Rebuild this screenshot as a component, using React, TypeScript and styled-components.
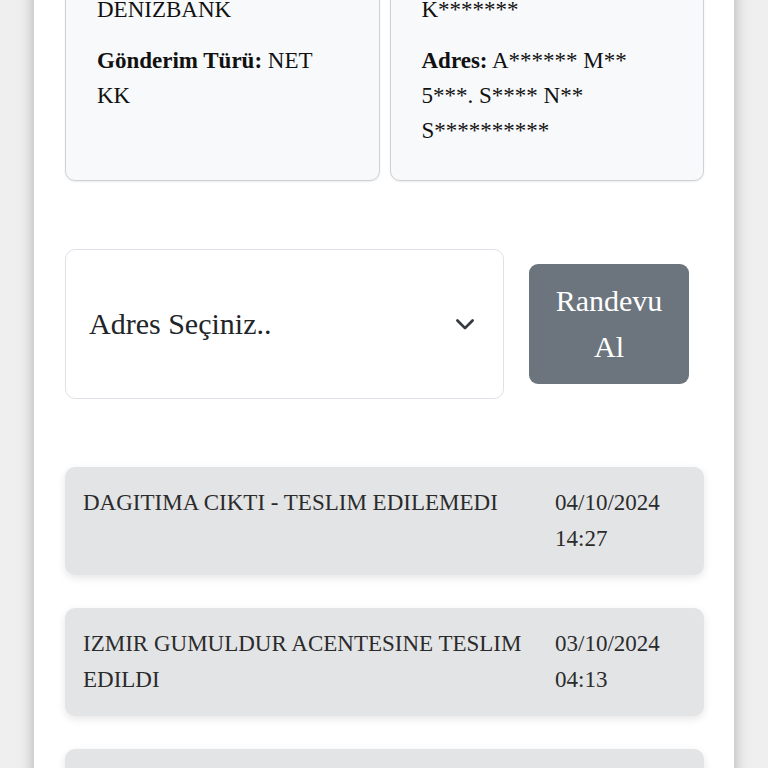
import React from 'react';
import styled, { createGlobalStyle } from 'styled-components';

const GlobalStyle = createGlobalStyle`
	html, body {
		margin: 0;
		padding: 0;
		background: #efefef;
		font-family: "Liberation Serif", "Times New Roman", serif;
		color: #212529;
		overflow: hidden;
	}
	* {
		box-sizing: border-box;
	}
`;

type Movement = {
	status: string;
	date: string;
	time: string;
};

const movements: Movement[] = [
	{ status: 'DAGITIMA CIKTI - TESLIM EDILEMEDI', date: '04/10/2024', time: '14:27' },
	{ status: 'IZMIR GUMULDUR ACENTESINE TESLIM EDILDI', date: '03/10/2024', time: '04:13' },
	{ status: 'IZMIR TRANSFER MERKEZINE ULASTI', date: '02/10/2024', time: '22:51' },
];

const ChevronDown = () => (
	<svg width="22" height="22" viewBox="0 0 16 16" fill="none">
		<path
			d="m2.5 5.5 5.5 5.5 5.5-5.5"
			stroke="#343a40"
			strokeWidth="2"
			strokeLinecap="round"
			strokeLinejoin="round"
		/>
	</svg>
);

const App = () => (
	<>
		<GlobalStyle />
		<Panel>
			<InfoGrid>
				<InfoCard>
					<Line>
						<b>Gönderici Firma:</b> DENIZBANK
					</Line>
					<Line>
						<b>Gönderim Türü:</b> NET KK
					</Line>
				</InfoCard>
				<InfoCard>
					<Line>
						<b>Alıcı:</b> M******* K*******
					</Line>
					<Line>
						<b>Adres:</b> A****** M** 5***. S**** N** S**********
					</Line>
				</InfoCard>
			</InfoGrid>

			<AppointmentRow>
				<AddressSelect>
					<span>Adres Seçiniz..</span>
					<ChevronDown />
				</AddressSelect>
				<AppointmentButton>Randevu Al</AppointmentButton>
			</AppointmentRow>

			<Timeline>
				{movements.map((m) => (
					<MovementItem key={m.date + m.time}>
						<Status>{m.status}</Status>
						<DateCell>
							{m.date}
							<br />
							{m.time}
						</DateCell>
					</MovementItem>
				))}
			</Timeline>
		</Panel>
	</>
);

const Panel = styled.div`
	width: 700px;
	min-height: 1000px;
	margin: -91px 34px 0;
	padding: 31px 30px 40px 31px;
	background: #fff;
	box-shadow: 0 0 14px rgba(0, 0, 0, 0.28);
`;

const InfoGrid = styled.div`
	display: grid;
	grid-template-columns: 1fr 1fr;
	gap: 10px;
`;

const InfoCard = styled.div`
	padding: 16px 31px;
	background: #f8f9fa;
	border: 1px solid #cfd2d5;
	border-radius: 10px;
	box-shadow: 0 1px 2px rgba(0, 0, 0, 0.08);
	font-size: 23px;
	line-height: 35px;
	color: #111;
`;

const Line = styled.p`
	margin: 0 0 16px;
`;

const AppointmentRow = styled.div`
	display: flex;
	align-items: center;
	gap: 25px;
	margin: 68px 15px 0 0;
`;

const AddressSelect = styled.div`
	flex: 1;
	height: 150px;
	display: flex;
	align-items: center;
	justify-content: space-between;
	padding: 0 27px 0 23px;
	background: #fff;
	border: 1px solid #dee2e6;
	border-radius: 10px;
	font-size: 30px;
	color: #212529;
`;

const AppointmentButton = styled.button`
	width: 160px;
	height: 120px;
	padding: 0 20px;
	border: none;
	border-radius: 9px;
	background: #6c757d;
	color: #fff;
	font-family: inherit;
	font-size: 30px;
	line-height: 46px;
	text-align: center;
`;

const Timeline = styled.div`
	display: flex;
	flex-direction: column;
	gap: 33px;
	margin-top: 68px;
`;

const MovementItem = styled.div`
	display: grid;
	grid-template-columns: 1fr 131px;
	column-gap: 20px;
	padding: 18px;
	background: #e3e4e6;
	border-radius: 10px;
	box-shadow: 0 3px 8px rgba(0, 0, 0, 0.1);
	font-size: 23px;
	line-height: 36px;
	color: #2b2b2b;
`;

const Status = styled.div``;

const DateCell = styled.div``;

export default App;
